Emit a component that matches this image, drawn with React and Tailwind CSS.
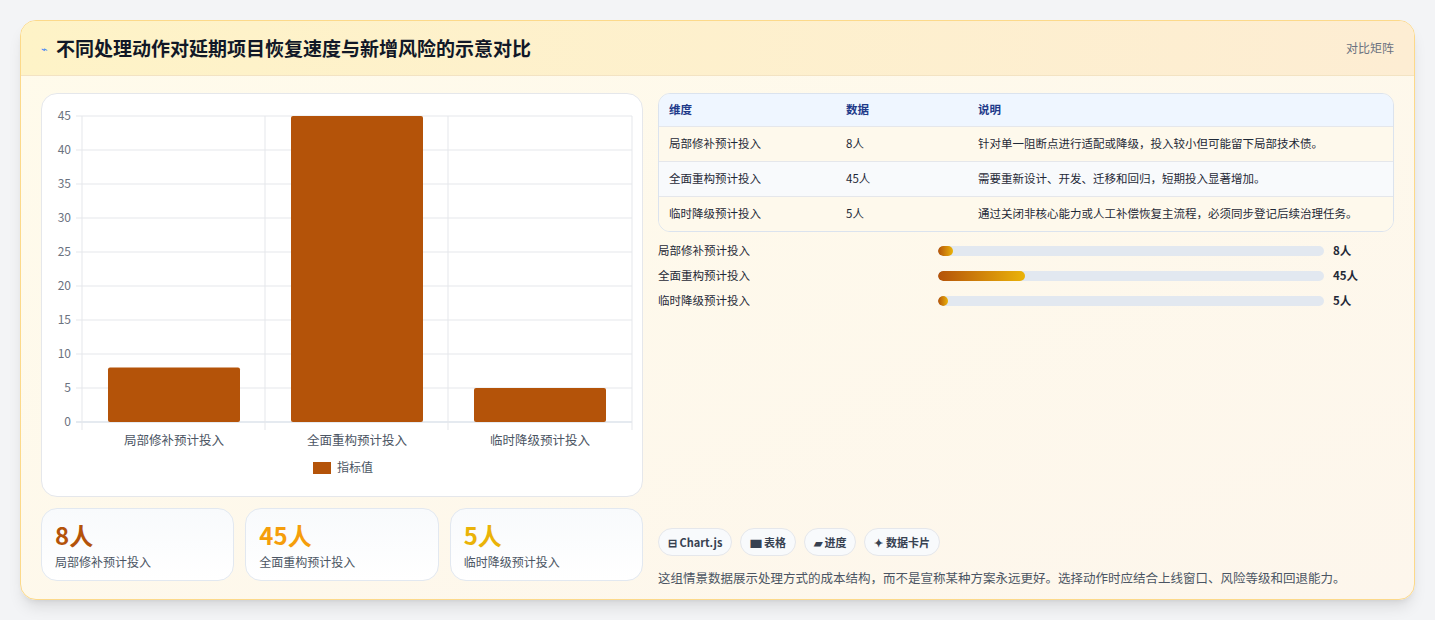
export default function App() {
  const f = { fontFamily: '"Noto Sans CJK SC","Noto Sans",sans-serif' };
  const rows = [
    ["局部修补预计投入", "8人", "针对单一阻断点进行适配或降级，投入较小但可能留下局部技术债。", 8],
    ["全面重构预计投入", "45人", "需要重新设计、开发、迁移和回归，短期投入显著增加。", 45],
    ["临时降级预计投入", "5人", "通过关闭非核心能力或人工补偿恢复主流程，必须同步登记后续治理任务。", 5],
  ];
  const ticks = [0, 5, 10, 15, 20, 25, 30, 35, 40, 45];
  const y = (v) => 328 - v * 6.8;
  return (
    <div style={f} className="w-[1435px] h-[620px] bg-[#f3f4f6] pt-5 px-5">
      <div className="w-[1395px] h-[580px] rounded-2xl border border-[#fcd98a] bg-gradient-to-br from-[#fffbeb] to-[#fdf6ec] shadow-lg overflow-hidden">
        <div className="h-[55px] flex items-center justify-between px-5 bg-gradient-to-r from-[#fef3c7] to-[#fdedd3] border-b border-[#f3e3c3]">
          <div className="flex items-center gap-2">
            <span className="text-[#3b82f6] text-[11px]">⌁</span>
            <span className="text-[19px] font-bold text-[#111827]">不同处理动作对延期项目恢复速度与新增风险的示意对比</span>
          </div>
          <span className="text-[12px] text-[#6b7280]">对比矩阵</span>
        </div>
        <div className="flex gap-[15px] px-5 pt-[17px]">
          <div className="w-[602px] flex flex-col gap-[11px]">
            <div className="h-[404px] bg-white rounded-2xl border border-[#e5e7eb]">
              <svg width="602" height="403" style={{ fontFamily: '"Noto Sans CJK SC",sans-serif' }}>
                {ticks.map((t) => (
                  <g key={t}>
                    <line x1="34" x2="590" y1={y(t)} y2={y(t)} stroke={t === 0 ? "#cbd5e1" : "#e5e7eb"} />
                    <text x="29" y={y(t) + 4} textAnchor="end" fontSize="12" fill="#6b7280">{t}</text>
                  </g>
                ))}
                {[40, 223, 406, 590].map((x) => (
                  <line key={x} x1={x} x2={x} y1="22" y2="336" stroke="#e5e7eb" />
                ))}
                {rows.map((r, i) => (
                  <g key={i}>
                    <rect x={66 + i * 183} y={y(r[3])} width="132" height={r[3] * 6.8} rx="2" fill="#b45309" />
                    <text x={132 + i * 183} y="351" textAnchor="middle" fontSize="12.5" fill="#4b5563">{r[0]}</text>
                  </g>
                ))}
                <rect x="271" y="368" width="18" height="12" fill="#b45309" />
                <text x="295" y="378" fontSize="12" fill="#4b5563">指标值</text>
              </svg>
            </div>
            <div className="flex gap-[11px]">
              {rows.map((r, i) => (
                <div key={i} className="w-[194px] h-[73px] rounded-2xl border border-[#e2e8f0] bg-gradient-to-b from-[#f8fafc] to-white px-[13px] pt-[10px]">
                  <div className={`text-[24px] font-bold leading-[32px] ${i === 0 ? "text-[#b45309]" : i === 1 ? "text-[#f59e0b]" : "text-[#eab308]"}`}>{r[1]}</div>
                  <div className="text-[12px] text-[#4b5563] mt-[2px]">{r[0]}</div>
                </div>
              ))}
            </div>
          </div>
          <div className="w-[738px] flex flex-col">
            <div className="rounded-xl border border-[#dbe3ee] overflow-hidden text-[11.5px]">
              {[["维度", "数据", "说明"], ...rows].map((r, i) => (
                <div key={i} className={`flex items-center px-[10px] ${i === 0 ? "h-[32px] bg-[#eff6ff] text-[#1e3a8a] font-bold" : `h-[35px] border-t border-[#e5e7eb] text-[#1f2937] ${i === 2 ? "bg-[#f8fafc]" : "bg-[#fef9ec]"}`}`}>
                  <div className="w-[177px]">{r[0]}</div>
                  <div className="w-[132px]">{r[1]}</div>
                  <div>{r[2]}</div>
                </div>
              ))}
            </div>
            <div className="mt-[11px] flex flex-col gap-[9px]">
              {rows.map((r, i) => (
                <div key={i} className="flex items-center h-[16px] text-[11.5px]">
                  <div className="w-[280px] text-[#1f2937]">{r[0]}</div>
                  <div className="w-[386px] h-[10px] rounded-full bg-[#e2e8f0] overflow-hidden">
                    <div className="h-full rounded-full bg-gradient-to-r from-[#b45309] to-[#eab308]" style={{ width: `${(r[3] / 200) * 100}%` }} />
                  </div>
                  <div className="ml-[9px] font-bold text-[#1f2937]">{r[1]}</div>
                </div>
              ))}
            </div>
            <div className="mt-[219px] flex gap-[8px]">
              {["⊟ Chart.js", "▆ 表格", "▰ 进度", "✦ 数据卡片"].map((c) => (
                <span key={c} className="h-[28px] px-[9px] flex items-center rounded-full border border-[#e5e7eb] bg-[#f8fafc] text-[11px] font-bold text-[#374151]">{c}</span>
              ))}
            </div>
            <div className="mt-[13px] text-[12.5px] text-[#4b5563]">这组情景数据展示处理方式的成本结构，而不是宣称某种方案永远更好。选择动作时应结合上线窗口、风险等级和回退能力。</div>
          </div>
        </div>
      </div>
    </div>
  );
}
